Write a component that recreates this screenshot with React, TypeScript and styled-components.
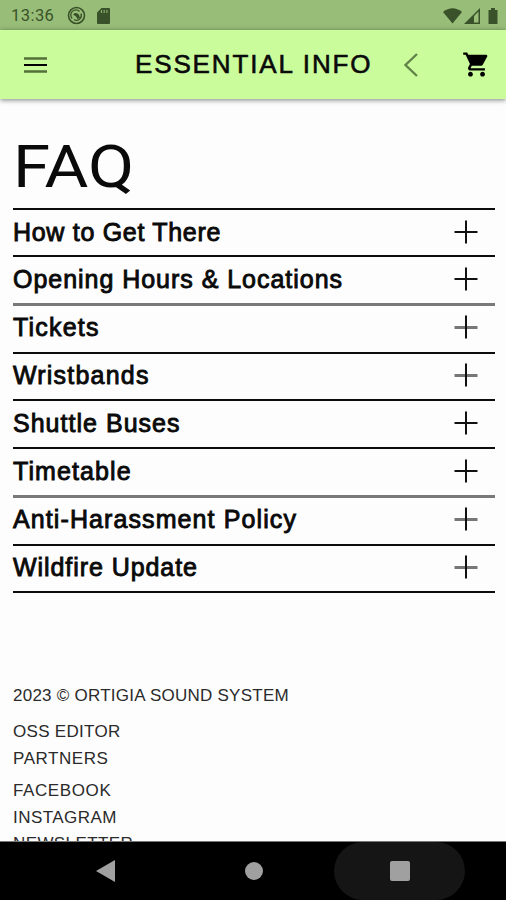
import React from "react";
import styled, { createGlobalStyle } from "styled-components";

const GlobalStyle = createGlobalStyle`
  * { box-sizing: border-box; }
  body { margin: 0; background: #fdfdfd; }
`;

const Screen = styled.div`
  width: 506px;
  height: 900px;
  display: flex;
  flex-direction: column;
  overflow: hidden;
  background: #fdfdfd;
  color: #0a0a0a;
  font-family: "Liberation Sans", Arial, sans-serif;
`;

const StatusBar = styled.div`
  height: 30px;
  flex: none;
  display: flex;
  align-items: center;
  padding: 1px 8px 0 11px;
  background: #98bd78;
  color: #3a5229;
`;

const Clock = styled.span`
  width: 56px;
  font: 400 16.5px/20px Roboto, sans-serif;
  letter-spacing: 0.45px;
`;

const StatusIcons = styled.div`
  display: flex;
  align-items: center;
  gap: 11px;
`;

const SignalIcons = styled(StatusIcons)`
  margin-left: auto;
  gap: 2px;
`;

const AppBar = styled.header`
  height: 69px;
  flex: none;
  display: flex;
  align-items: center;
  padding: 0 15px 0 24px;
  background: #cbfc9c;
  box-shadow: 0 1px 5px rgba(0, 0, 0, 0.5);
`;

const Title = styled.h1`
  margin: -1px 0 0 87px;
  width: 268px;
  font-weight: 400;
  font-size: 26px;
  line-height: 32px;
  letter-spacing: 1.85px;
  -webkit-text-stroke: 0.6px #0a0a0a;
  white-space: nowrap;
`;

const CartSlot = styled.div`
  display: flex;
  margin-left: auto;
`;

const Content = styled.main`
  flex: 1;
  min-height: 0;
  overflow: hidden;
  padding: 33px 11px 0 13px;
`;

const Heading = styled.h2`
  margin: 0;
  height: 76px;
  font: 400 59.5px/70px Roboto, sans-serif;
  transform: scaleX(1.13);
  transform-origin: left;
`;

const List = styled.div`
  display: flex;
  flex-direction: column;
`;

const Row = styled.div<{ $height: number; $soft?: boolean }>`
  display: flex;
  justify-content: space-between;
  height: ${(p) => p.$height}px;
  padding-right: 17px;
  border-top: ${(p) => (p.$soft ? "3px solid #777a77" : "2px solid #0c0c0c")};
`;

const Label = styled.span<{ $tracking: number; $lift: number }>`
  margin-top: ${(p) => -p.$lift}px;
  font-weight: 400;
  font-size: 25px;
  line-height: 45px;
  letter-spacing: ${(p) => p.$tracking}px;
  -webkit-text-stroke: 0.9px #0a0a0a;
  white-space: nowrap;
`;

const PlusIcon = styled.svg<{ $lift: number }>`
  margin-top: ${(p) => 10 - p.$lift}px;
  flex: none;
`;

const Footer = styled.footer`
  padding-top: 93px;
`;

const FooterLine = styled.div<{ $gap: number; $tracking: number }>`
  height: 20px;
  margin-bottom: ${(p) => p.$gap}px;
  color: #2a2a2a;
  font-size: 17px;
  line-height: 20px;
  letter-spacing: ${(p) => p.$tracking}px;
  white-space: nowrap;
`;

const NavBar = styled.nav`
  height: 59px;
  flex: none;
  display: flex;
  align-items: center;
  padding-left: 96px;
  background: #000;
  border-top: 1px solid #777;
`;

const HomeDot = styled.div`
  width: 18px;
  height: 18px;
  margin-left: 130px;
  border-radius: 50%;
  background: #a0a0a0;
`;

const RecentsPill = styled.div`
  width: 131px;
  height: 58px;
  margin-left: 71px;
  display: flex;
  align-items: center;
  justify-content: center;
  border-radius: 29px;
  background: #151515;
`;

const RecentsSquare = styled.div`
  width: 20px;
  height: 20px;
  border-radius: 2px;
  background: #a0a0a0;
`;

const faq = [
  { text: "How to Get There", tracking: 0.7, height: 47, lift: 0 },
  { text: "Opening Hours & Locations", tracking: 0.97, height: 48, lift: 0 },
  { text: "Tickets", tracking: 1.2, height: 49, lift: 1, soft: true },
  { text: "Wristbands", tracking: 1.2, height: 47, lift: 1 },
  { text: "Shuttle Buses", tracking: 1.02, height: 48, lift: 0 },
  { text: "Timetable", tracking: 1.1, height: 48, lift: 0 },
  { text: "Anti-Harassment Policy", tracking: 1.1, height: 49, lift: 1, soft: true },
  { text: "Wildfire Update", tracking: 0.93, height: 47, lift: 1 },
];

const footer = [
  { text: "2023 © ORTIGIA SOUND SYSTEM", gap: 16, tracking: 0.25 },
  { text: "OSS EDITOR", gap: 7, tracking: 0.3 },
  { text: "PARTNERS", gap: 12, tracking: 0.55 },
  { text: "FACEBOOK", gap: 7, tracking: 0.6 },
  { text: "INSTAGRAM", gap: 6, tracking: 0.45 },
  { text: "NEWSLETTER", gap: 0, tracking: 0.4 },
];

export default function App() {
  return (
    <>
      <GlobalStyle />
      <Screen>
        <StatusBar>
          <Clock>13:36</Clock>
          <StatusIcons>
            <svg width="19" height="19" viewBox="0 0 19 19" fill="none" stroke="currentColor">
              <circle cx="9.5" cy="9.5" r="8" strokeWidth="1.6" />
              <path d="M5.200 12.500a5 5 0 0 1 7.300-7M14 7.500a5 5 0 0 1-7 6.200" strokeWidth="1.300" />
              <path d="M6 8.500q3-3 6 .2l1 3.300-2.500 1-1.500-2.500z" fill="currentColor" stroke="none" />
            </svg>
            <svg width="13" height="16" viewBox="0 0 13 16" fill="currentColor">
              <path d="M4.500 0H12a1 1 0 0 1 1 1v14a1 1 0 0 1-1 1H1a1 1 0 0 1-1-1V4.500z" />
              <path d="M4.500 2v3M7.200 2v3M9.900 2v3" stroke="#86a969" strokeWidth="1.200" />
            </svg>
          </StatusIcons>
          <SignalIcons>
            <svg width="19" height="16" viewBox="0 0 19 16" fill="currentColor">
              <path d="M0 4Q9.500-3.500 19 4L9.500 15.500z" />
            </svg>
            <svg width="16" height="16" viewBox="0 0 16 16" fill="currentColor">
              <path fillRule="evenodd" d="M0 16 16 0V16zM10 8V14.500H14.500V3.500z" />
            </svg>
            <svg width="16" height="16" viewBox="0 0 16 16" fill="currentColor">
              <path d="M9 0h4v2h2.500v14H6.500V2H9z" />
            </svg>
          </SignalIcons>
        </StatusBar>
        <AppBar>
          <svg width="24" height="18" viewBox="0 0 24 18">
            <path d="M0 2.500H23M0 15.500H23" stroke="#527038" strokeWidth="2.500" />
            <path d="M0 9H23" stroke="#000" strokeWidth="2" />
          </svg>
          <Title>ESSENTIAL INFO</Title>
          <svg width="16" height="24" viewBox="0 0 16 24" fill="none" stroke="#618348" strokeWidth="2.400">
            <path d="M14 1 2.500 12 14 23" />
          </svg>
          <CartSlot>
            <svg width="29" height="29" viewBox="0 0 24 24" fill="#000">
              <path d="M7 18c-1.100 0-1.990.9-1.990 2S5.900 22 7 22s2-.9 2-2-.9-2-2-2zM1 2v2h2l3.600 7.590-1.350 2.450c-.16.280-.25.610-.25.960 0 1.100.9 2 2 2h12v-2H7.420c-.14 0-.25-.11-.25-.25l.03-.12.900-1.630h7.450c.75 0 1.410-.41 1.750-1.030l3.580-6.490A1 1 0 0 0 20 4H5.210l-.94-2H1zm16 16c-1.100 0-1.990.9-1.990 2s.89 2 1.990 2 2-.9 2-2-.9-2-2-2z" />
            </svg>
          </CartSlot>
        </AppBar>
        <Content>
          <Heading>FAQ</Heading>
          <List>
            {faq.map((item) => (
              <Row key={item.text} $height={item.height} $soft={item.soft}>
                <Label $tracking={item.tracking} $lift={item.lift}>{item.text}</Label>
                <PlusIcon width="24" height="24" viewBox="0 0 24 24" $lift={item.lift}>
                  {item.lift ? (
                    <path d="M0.500 12.500H23.500" stroke="#777" strokeWidth="3" />
                  ) : (
                    <path d="M0.500 12H23.500" stroke="#111" strokeWidth="2" />
                  )}
                  <path d="M12 0.500V23.500" stroke="#111" strokeWidth="2" />
                </PlusIcon>
              </Row>
            ))}
            <Row $height={2} />
          </List>
          <Footer>
            {footer.map((line) => (
              <FooterLine key={line.text} $gap={line.gap} $tracking={line.tracking}>
                {line.text}
              </FooterLine>
            ))}
          </Footer>
        </Content>
        <NavBar>
          <svg width="19" height="22" viewBox="0 0 19 22">
            <path d="M0 11 19 0V22z" fill="#a0a0a0" />
          </svg>
          <HomeDot />
          <RecentsPill>
            <RecentsSquare />
          </RecentsPill>
        </NavBar>
      </Screen>
    </>
  );
}
